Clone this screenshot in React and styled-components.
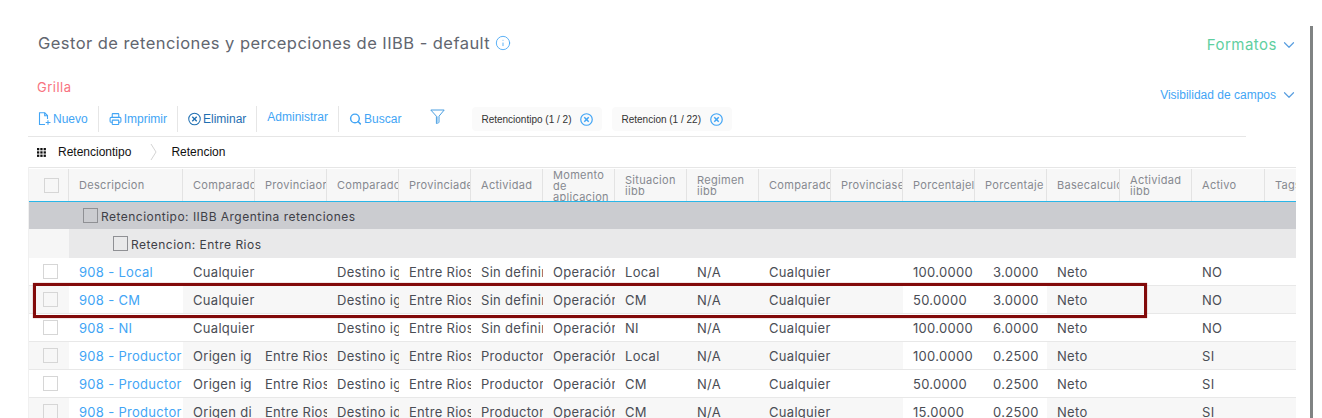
import React from "react";
import styled, { createGlobalStyle } from "styled-components";
import { ChevronDown, Info, Printer, Search } from "lucide-react";

const DISPLAY = `"Inter", "DejaVu Sans", sans-serif`;
const UI = `"Liberation Sans", Arial, sans-serif`;
const COLUMNS = "40px 114px repeat(12, 72px) 73px 72px 73px 31px";

const headers = [
  { label: "Descripcion" },
  { label: "Comparador" },
  { label: "Provinciaorigen" },
  { label: "Comparador" },
  { label: "Provinciadestino" },
  { label: "Actividad" },
  { label: "Momento de aplicacion", small: true },
  { label: "Situacion iibb", small: true },
  { label: "Regimen iibb", small: true },
  { label: "Comparador" },
  { label: "Provinciasexcluidas" },
  { label: "Porcentajelimite" },
  { label: "Porcentaje" },
  { label: "Basecalculo" },
  { label: "Actividad iibb", small: true },
  { label: "Activo" },
  { label: "Tags" },
];

const rows = [
  ["908 - Local", "Cualquier", "", "Local", "Sin definir", "100.0000", "3.0000", "NO", "Destino igual"],
  ["908 - CM", "Cualquier", "", "CM", "Sin definir", "50.0000", "3.0000", "NO", "Destino igual"],
  ["908 - NI", "Cualquier", "", "NI", "Sin definir", "100.0000", "6.0000", "NO", "Destino igual"],
  ["908 - Productor", "Origen ig", "Entre Rios", "Local", "Productor", "100.0000", "0.2500", "SI", "Destino igual"],
  ["908 - Productor", "Origen ig", "Entre Rios", "CM", "Productor", "50.0000", "0.2500", "SI", "Destino igual"],
  ["908 - Productor", "Origen di", "Entre Rios", "CM", "Productor", "15.0000", "0.2500", "SI", "Destino igual"],
];

const FilePlusIcon = () => (
  <svg width="13" height="14" viewBox="0 0 13 14" fill="none" stroke="currentColor" strokeWidth="1.1">
    <path d="M7 12.5H1.5V.8h5.2l2.8 2.8V7" />
    <path d="M6.7.8v3h2.8" />
    <path d="M10 8.2v4.6M7.7 10.5h4.8" />
  </svg>
);

const CircleXIcon = ({ size = 14, weight = 1.1 }) => (
  <svg width={size} height={size} viewBox="0 0 14 14" fill="none" stroke="currentColor" strokeWidth={weight}>
    <circle cx="7" cy="7" r="6.2" />
    <path d="M4.6 4.6l4.8 4.8M9.4 4.6l-4.8 4.8" strokeWidth={weight + 0.3} />
  </svg>
);

const FunnelIcon = () => (
  <svg width="15" height="15" viewBox="0 0 15 15" fill="none" stroke="#4a9ee0" strokeWidth="1">
    <path d="M.8 1h13.4L9 7.2v6.3l-2.6 1V7.2z" strokeLinejoin="round" />
    <path d="M7 7.5h1.8v6L7 14.2z" fill="#a5d2f5" stroke="none" />
  </svg>
);

const GridIcon = () => (
  <svg width="9" height="9" viewBox="0 0 9 9" fill="#111">
    {[0, 3.3, 6.6].map((y) =>
      [0, 3.3, 6.6].map((x) => <rect key={`${x}-${y}`} x={x} y={y} width="2.3" height="2.3" />)
    )}
  </svg>
);

const BreadcrumbArrow = () => (
  <svg width="7" height="18" viewBox="0 0 7 18" fill="none" stroke="#d4d4d4">
    <path d="M1 1l5 8-5 8" />
  </svg>
);

export default function App() {
  return (
    <Page>
      <GlobalStyle />
      <Header>
        <Title>
          Gestor de retenciones y percepciones de IIBB - default
          <InfoIcon size={16} strokeWidth={1.3} />
        </Title>
        <Formatos>
          Formatos
          <Chevron size={18} strokeWidth={1.6} />
        </Formatos>
      </Header>

      <SectionBar>
        <SectionName>Grilla</SectionName>
        <Visibility>
          Visibilidad de campos
          <Chevron size={18} strokeWidth={1.6} />
        </Visibility>
      </SectionBar>

      <Toolbar>
        <ToolItem $first>
          <IconSlot>
            <FilePlusIcon />
          </IconSlot>
          Nuevo
        </ToolItem>
        <ToolItem>
          <IconSlot>
            <Printer size={16} strokeWidth={2} />
          </IconSlot>
          Imprimir
        </ToolItem>
        <ToolItem $dark>
          <IconSlot>
            <CircleXIcon />
          </IconSlot>
          Eliminar
        </ToolItem>
        <ToolItem $raised>Administrar</ToolItem>
        <ToolItem $plain>
          <IconSlot>
            <Search size={16} strokeWidth={2.7} />
          </IconSlot>
          Buscar
        </ToolItem>
        <FilterButton>
          <FunnelIcon />
        </FilterButton>
        <Chip>
          Retenciontipo (1 / 2)
          <ChipClose>
            <CircleXIcon size={13} weight={1.3} />
          </ChipClose>
        </Chip>
        <Chip>
          Retencion (1 / 22)
          <ChipClose>
            <CircleXIcon size={13} weight={1.3} />
          </ChipClose>
        </Chip>
      </Toolbar>

      <Breadcrumb>
        <GridIcon />
        <Crumb>Retenciontipo</Crumb>
        <BreadcrumbArrow />
        <Crumb>Retencion</Crumb>
      </Breadcrumb>

      <Table>
        <HeadRow>
          <HeadCell>
            <Check $head />
          </HeadCell>
          {headers.map((h, i) => (
            <HeadCell key={i} $small={h.small}>
              <span>{h.label}</span>
            </HeadCell>
          ))}
        </HeadRow>

        <GroupRow>
          <GroupCheck />
          Retenciontipo: IIBB Argentina retenciones
        </GroupRow>
        <SubGroupRow>
          <SubGroupBody>
            <GroupCheck />
            Retencion: Entre Rios
          </SubGroupBody>
        </SubGroupRow>

        {rows.map((r, i) => {
          const [name, origin, originProv, situation, activity, base, rate, active, dest] = r;
          const striped = i % 2 === 1;
          return (
            <Row key={i} $striped={striped}>
              <Cell>
                <Check />
              </Cell>
              <Cell $white>
                <Link>{name}</Link>
              </Cell>
              <Cell>{origin}</Cell>
              <Cell>{originProv}</Cell>
              <Cell>{dest}</Cell>
              <Cell>Entre Rios</Cell>
              <Cell>{activity}</Cell>
              <Cell>Operación interna</Cell>
              <Cell>{situation}</Cell>
              <Cell>N/A</Cell>
              <Cell>Cualquier</Cell>
              <Cell />
              <Cell $white>{base}</Cell>
              <Cell $white $indent={18}>
                {rate}
              </Cell>
              <Cell>Neto</Cell>
              <Cell />
              <Cell>{active}</Cell>
              <Cell />
              {i === 1 && <Highlight />}
            </Row>
          );
        })}
      </Table>

      <ScrollThumb />
    </Page>
  );
}

const GlobalStyle = createGlobalStyle`
  html, body {
    margin: 0;
    background: #fff;
    overflow: hidden;
  }
  * {
    box-sizing: border-box;
  }
`;

const Page = styled.div`
  position: relative;
  height: 418px;
  overflow: hidden;
  padding: 30px 0 0 28px;
  font-family: ${DISPLAY};
`;

const Header = styled.div`
  display: flex;
  align-items: center;
  justify-content: space-between;
  width: 1268px;
  height: 26px;
  margin-bottom: 22px;
  padding: 0 1px 0 10px;
`;

const Title = styled.h1`
  display: flex;
  align-items: center;
  gap: 5px;
  margin: 0;
  font-size: 16.5px;
  font-weight: 400;
  letter-spacing: 0.45px;
  color: #62666f;
`;

const InfoIcon = styled(Info)`
  color: #42a5f5;
`;

const Chevron = styled(ChevronDown)`
  margin-right: -3px;
  color: #5a9fe0;
`;

const Formatos = styled.div`
  display: flex;
  align-items: center;
  gap: 3px;
  padding-top: 3px;
  font-size: 15px;
  letter-spacing: 0.5px;
  color: #5fcf9f;
`;

const SectionBar = styled.div`
  display: flex;
  justify-content: space-between;
  width: 1267px;
  height: 27px;
  padding-left: 9px;
`;

const SectionName = styled.div`
  font-size: 13px;
  line-height: 18px;
  letter-spacing: 0.5px;
  color: #f8737f;
`;

const Visibility = styled.div`
  display: flex;
  align-items: center;
  align-self: flex-end;
  gap: 4px;
  height: 18px;
  margin-bottom: 1px;
  font-family: ${UI};
  font-size: 12px;
  color: #42a5f5;
`;

const Toolbar = styled.div`
  display: flex;
  align-items: center;
  width: 1218px;
  height: 32px;
  padding: 0 0 3px 10px;
  border-bottom: 1px solid #e6e6e6;
  font-family: ${UI};
  font-size: 12px;
`;

const ToolItem = styled.div`
  display: flex;
  align-items: center;
  gap: 2px;
  height: 26px;
  padding: ${(p) => (p.$raised ? "0 10px 4px" : "0 10px")};
  padding-left: ${(p) => (p.$first ? 0 : "10px")};
  border-right: ${(p) => (p.$plain ? "none" : "1px solid #e6e6e6")};
  color: ${(p) => (p.$dark ? "#1f6fb2" : "#42a5f5")};
`;

const IconSlot = styled.span`
  display: flex;
  flex: none;
  justify-content: center;
  width: 13px;
`;

const FilterButton = styled.div`
  display: flex;
  margin: 0 27px 5px 19px;
`;

const Chip = styled.div`
  display: flex;
  align-items: center;
  justify-content: space-between;
  height: 24px;
  margin-right: 10px;
  padding: 0 9px;
  border-radius: 4px;
  background: #fafafa;
  font-size: 10px;
  color: #333;
`;

const ChipClose = styled.span`
  display: flex;
  margin-left: 9px;
  color: #42a5f5;
`;

const Breadcrumb = styled.div`
  display: flex;
  align-items: center;
  height: 30px;
  padding-left: 9px;
  font-family: ${UI};
  font-size: 12px;
  color: #111;

  svg:first-child {
    margin-right: 12px;
  }
`;

const Crumb = styled.span`
  & + svg {
    margin: 0 14px 0 19px;
  }
`;

const Table = styled.div`
  width: 1268px;
  border-left: 1px solid #f0f0f0;
`;

const HeadRow = styled.div`
  display: grid;
  grid-template-columns: ${COLUMNS};
  border-top: 1px solid #e6e6e6;
  padding-top: 1px;
  border-bottom: 1px solid #29b6e8;
`;

const HeadCell = styled.div`
  display: flex;
  align-items: center;
  height: 32px;
  padding: ${(p) => (p.$small ? "2px 0 0 10px" : "0 0 0 10px")};
  overflow: hidden;
  background: #f7f7f7;
  border-right: 1px solid #e3e3e3;
  white-space: ${(p) => (p.$small ? "normal" : "nowrap")};
  font-size: 11px;
  line-height: 11px;
  letter-spacing: 0.3px;
  color: #868990;

  &:last-child {
    border-right: none;
  }
`;

const Check = styled.div`
  flex: none;
  width: 15px;
  height: 15px;
  margin: ${(p) => (p.$head ? "0 0 0 5px" : "-1px 0 0 4px")};
  border: 1px solid #d6d6d6;
  background: ${(p) => (p.$head ? "#f7f7f7" : "transparent")};
`;

const GroupCheck = styled.div`
  flex: none;
  width: 15px;
  height: 15px;
  margin: -1px 3px 0 0;
  border: 1px solid #8f9094;
`;

const GroupRow = styled.div`
  display: flex;
  align-items: center;
  height: 27px;
  padding: 1px 0 0 54px;
  background: #cbccd0;
  font-size: 12px;
  letter-spacing: 0.48px;
  color: #3e4047;
`;

const SubGroupRow = styled.div`
  height: 29px;
  padding-left: 40px;
  background: #f6f6f6;
`;

const SubGroupBody = styled.div`
  display: flex;
  align-items: center;
  height: 100%;
  padding: 1px 0 0 44px;
  background: #e9e9ea;
  font-size: 12px;
  letter-spacing: 0.48px;
  color: #3e4047;
`;

const Row = styled.div`
  position: relative;
  display: grid;
  grid-template-columns: ${COLUMNS};
  height: 28px;
  border-bottom: 1px solid #e8e8e8;
  background: ${(p) => (p.$striped ? "#f7f7f7" : "#fff")};
`;

const Cell = styled.div`
  display: flex;
  align-items: center;
  padding: 1px 0 0 ${(p) => (p.$indent ? `${p.$indent}px` : "10px")};
  overflow: hidden;
  white-space: nowrap;
  background: ${(p) => (p.$white ? "#fff" : "transparent")};
  font-size: 13px;
  letter-spacing: 0.3px;
  color: #4a4d55;
`;

const Link = styled.a`
  color: #42a5f5;
`;

const Highlight = styled.div`
  position: absolute;
  z-index: 1;
  top: -3px;
  left: 4px;
  width: 1114px;
  height: 35px;
  border: 3px solid #820a0a;
  box-shadow: 0 0 1px rgba(130, 10, 10, 0.6);
  pointer-events: none;
`;

const ScrollThumb = styled.div`
  position: absolute;
  top: 26px;
  bottom: 0;
  left: 1310px;
  width: 3px;
  background: #808383;
`;
